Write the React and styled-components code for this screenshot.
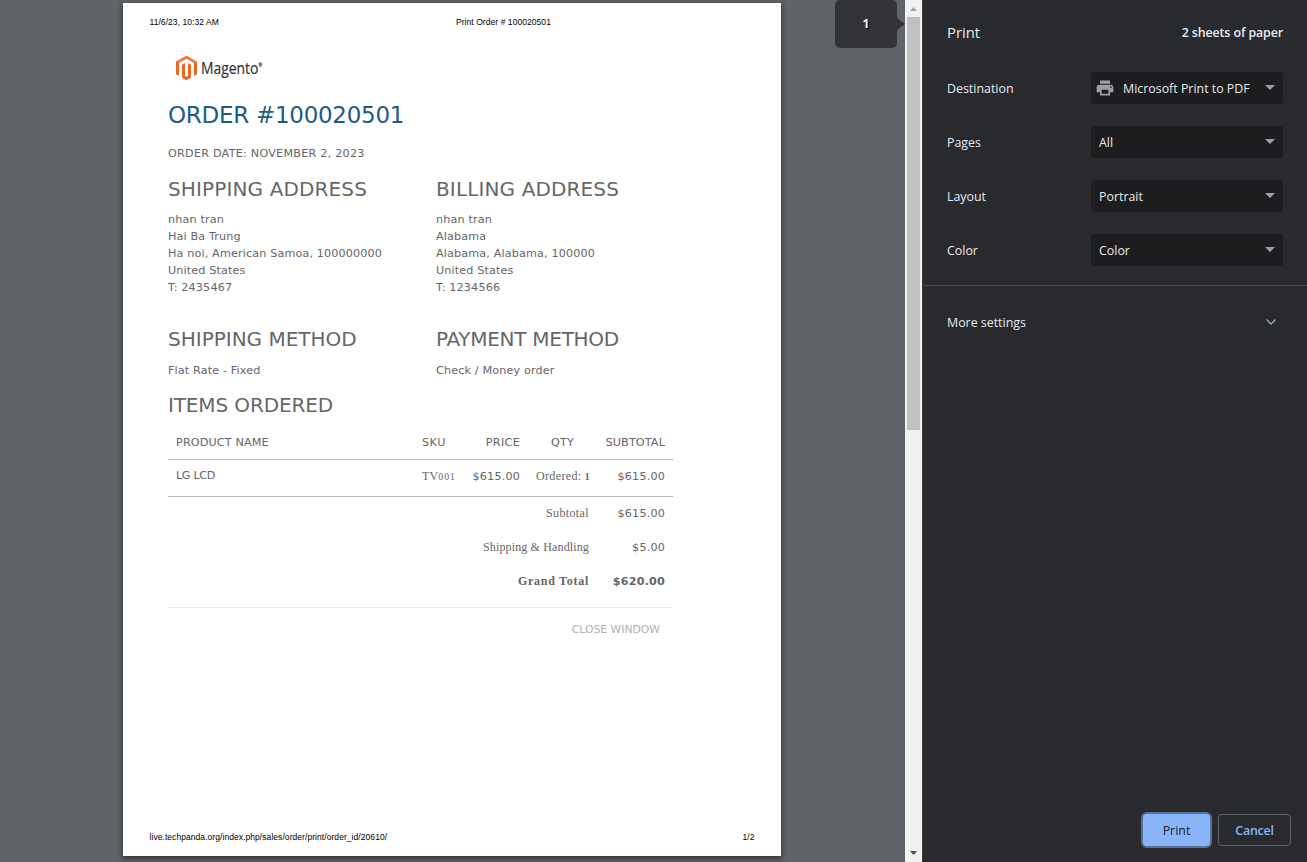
import React from "react";
import styled, { createGlobalStyle } from "styled-components";
import { MdPrint } from "react-icons/md";

const GlobalStyle = createGlobalStyle`
  * { box-sizing: border-box; }
  body { margin: 0; overflow: hidden; background: #292a2d; }
`;

const verdana = `"DejaVu Sans", Verdana, sans-serif`;
const georgia = `"Liberation Serif", Georgia, serif`;
const segoe = `"Open Sans", "Segoe UI", sans-serif`;

const Window = styled.div`
  display: flex;
  width: 1307px;
  height: 862px;
  overflow: hidden;
`;

/* ---------- preview ---------- */

const Viewer = styled.main`
  position: relative;
  width: 905px;
  height: 862px;
  padding: 3px 0 0 123px;
  background: #606468;
`;

const Sheet = styled.article`
  display: flex;
  flex-direction: column;
  width: 658px;
  height: 853px;
  background: #fff;
  color: #666;
  font: 11.2px/17px ${verdana};
  white-space: nowrap;
  box-shadow: 0 2px 5px 1px rgba(0, 0, 0, 0.45);
`;

const SheetMargin = styled.div`
  display: grid;
  grid-template-columns: ${(p) => p.$columns};
  align-items: center;
  flex: none;
  height: 38px;
  padding: 0 26.5px 0 26.5px;
  color: #000;
  font: 8.5px/12px "Liberation Sans", Arial, sans-serif;
  letter-spacing: 0.06px;
`;

const SheetBody = styled.div`
  flex: 1;
  width: 550px;
  padding-left: 45px;
`;

const LogoRow = styled.div`
  display: flex;
  align-items: center;
  height: 55px;
  padding: 0 0 1px 8px;
`;

const OrderTitle = styled.h1`
  margin: 0;
  color: #1e5d82;
  font-size: 23px;
  font-weight: 400;
  line-height: 39px;
  letter-spacing: -0.28px;
`;

const OrderDate = styled.p`
  margin: 0;
  line-height: 37px;
  letter-spacing: 0.23px;
`;

const Columns = styled.div`
  display: grid;
  grid-template-columns: 268px 1fr;
  height: ${(p) => p.$height}px;
`;

const SectionTitle = styled.h2`
  margin: 0;
  font-size: 20px;
  font-weight: 400;
  line-height: 34px;
  letter-spacing: ${(p) => p.$tracking || 0}px;
`;

const Lines = styled.address`
  margin-top: ${(p) => p.$gap}px;
  font-style: normal;
  letter-spacing: 0.14px;
`;

const Table = styled.div`
  width: 505px;
  margin-top: 4px;
`;

const TableRow = styled.div`
  display: grid;
  grid-template-columns: 246px 50px 64px 69px 76px;
  height: ${(p) => p.$height}px;
  line-height: 34px;
  border-bottom: 1px solid #b9b9b9;
`;

const Cell = styled.span`
  padding: 0 8px;
  text-align: ${(p) => p.$align || "left"};
  letter-spacing: ${(p) => p.$tracking ?? 0.17}px;
`;

const ProductCell = styled(Cell)`
  line-height: 31px;
`;

const SerifCell = styled(Cell)`
  font-family: ${georgia};
  font-size: 12px;
  line-height: ${(p) => p.$line || 32}px;
`;

const SmallFigures = styled.span`
  font-size: 9.8px;
  font-weight: ${(p) => (p.$bold ? 700 : 400)};
  letter-spacing: 0.9px;
`;

const Totals = styled.div`
  height: 111px;
  border-bottom: 1px solid #ebebeb;
`;

const TotalRow = styled.div`
  display: grid;
  grid-template-columns: 429px 76px;
  height: 34px;
  line-height: 34px;
  font-weight: ${(p) => (p.$grand ? 700 : 400)};
`;

const CloseWindow = styled.div`
  width: 505px;
  padding-right: 13px;
  color: #b1b1b1;
  font-size: 10.8px;
  line-height: 43px;
  text-align: right;
`;

const PageBadge = styled.div`
  position: absolute;
  top: 0;
  left: 835px;
  width: 62px;
  border-radius: 5px;
  background: #323336;
  color: #fff;
  font: 700 12px/48px ${segoe};
  text-align: center;
  text-shadow: 1px 1px 1px #000;

  &::after {
    content: "";
    position: absolute;
    top: 18px;
    left: 62px;
    border: 6px solid transparent;
    border-left: 8px solid #323336;
    border-right: 0;
  }
`;

const Scrollbar = styled.div`
  display: flex;
  flex-direction: column;
  align-items: center;
  width: 17px;
  height: 862px;
  background: #f1f1f1;
`;

const ScrollArrow = styled.svg`
  display: block;
  flex: none;
  width: 17px;
  height: 17px;
  fill: ${(p) => p.$color};
`;

const Thumb = styled.div`
  width: 13px;
  height: 413px;
  margin-bottom: auto;
  background: #c1c1c1;
`;

/* ---------- settings ---------- */

const Panel = styled.aside`
  display: flex;
  flex-direction: column;
  width: 385px;
  height: 862px;
  border-left: 1px solid #36373a;
  background: #292a2d;
  color: #e8eaed;
  font: 12.4px/20px ${segoe};
  white-space: nowrap;
`;

const PanelHeader = styled.header`
  display: flex;
  align-items: center;
  justify-content: space-between;
  height: 61px;
  padding: 4px 24px 0;
`;

const PanelTitle = styled.h1`
  margin: -2px 0 0;
  font-size: 14.8px;
  font-weight: 400;
  line-height: 20px;
`;

const SheetCount = styled.span`
  font-weight: 600;
  letter-spacing: -0.1px;
`;

const SettingRow = styled.label`
  display: flex;
  align-items: center;
  justify-content: space-between;
  height: 54px;
  padding: 0 24px;
`;

const Label = styled.span`
  padding-top: 2px;
`;

const Select = styled.span`
  display: flex;
  align-items: center;
  gap: 8px;
  width: 192px;
  height: 32px;
  padding: 0 8px 0 ${(p) => (p.$icon ? 4 : 8)}px;
  border-radius: 4px;
  background: #1d1d1f;

  > svg:first-child { color: #9aa0a6; }
`;

const Caret = styled.svg`
  width: 10px;
  height: 5px;
  margin: -2px 0 0 auto;
  fill: #9aa0a6;
`;

const MoreSettings = styled.div`
  display: flex;
  align-items: center;
  justify-content: space-between;
  height: 73px;
  margin-top: 8px;
  padding: 0 31px 0 24px;
  border-top: 1px solid #46474a;
`;

const Chevron = styled.svg`
  width: 10px;
  height: 6px;
  fill: none;
  stroke: #9aa0a6;
  stroke-width: 1.5;
`;

const Actions = styled.footer`
  display: flex;
  justify-content: flex-end;
  gap: 8px;
  margin-top: auto;
  padding: 0 16px 16px;
`;

const Button = styled.button`
  width: 73px;
  height: 32px;
  padding: 2px 0 0;
  border: 1px solid #5f6368;
  border-radius: 4px;
  background: transparent;
  color: #8ab4f8;
  font: 600 12.4px/20px ${segoe};
  letter-spacing: -0.2px;
`;

const PrimaryButton = styled(Button)`
  width: 67px;
  border: 0;
  background: #8ab4f8;
  color: #202124;
  font-weight: 400;
  letter-spacing: 0;
  box-shadow: 0 0 0 2px #58719a;
`;

function MagentoLogo() {
  return (
    <svg width="92" height="30" viewBox="0 -2 92 30">
      <path fill="#f37b3f" d="M10.5 0.4 21 6.4V19L18 20.7V8.1L10.5 3.8 3 8.1V20.7L0 19V6.4Z" />
      <path fill="#f26322" d="M0 6.4 3 8.1V20.7L0 19ZM18 8.1 21 6.4V19L18 20.7Z" />
      <path fill="#f26322" d="M6 9.8 9 8.1V20.9L10.5 21.8 12 20.9V8.1L15 9.8V22.5L10.5 25.2 6 22.5Z" />
      <text x="25" y="18.6" fill="#333" stroke="#333" strokeWidth="0.2" fontFamily={segoe} fontSize="16.2" textLength="61" lengthAdjust="spacingAndGlyphs">
        Magento<tspan dy="-6.5" fontSize="5">®</tspan>
      </text>
    </svg>
  );
}

function Address({ title, tracking, lines, gap = 5 }) {
  return (
    <section>
      <SectionTitle $tracking={tracking}>{title}</SectionTitle>
      <Lines $gap={gap}>
        {lines.map((line) => (
          <div key={line}>{line}</div>
        ))}
      </Lines>
    </section>
  );
}

function Setting({ label, value, icon }) {
  return (
    <SettingRow>
      <Label>{label}</Label>
      <Select $icon={Boolean(icon)}>
        {icon}
        <Label>{value}</Label>
        <Caret viewBox="0 0 10 5"><path d="M0 0h10L5 5z" /></Caret>
      </Select>
    </SettingRow>
  );
}

export default function App() {
  return (
    <Window>
      <GlobalStyle />
      <Viewer>
        <Sheet>
          <SheetMargin $columns="306.5px 1fr">
            <span>11/6/23, 10:32 AM</span>
            <span>Print Order # 100020501</span>
          </SheetMargin>
          <SheetBody>
            <LogoRow><MagentoLogo /></LogoRow>
            <OrderTitle>ORDER #100020501</OrderTitle>
            <OrderDate>ORDER DATE: NOVEMBER 2, 2023</OrderDate>
            <Columns $height={150}>
              <Address
                title="SHIPPING ADDRESS"
                tracking={0.13}
                lines={["nhan tran", "Hai Ba Trung", "Ha noi, American Samoa, 100000000", "United States", "T: 2435467"]}
              />
              <Address
                title="BILLING ADDRESS"
                tracking={0.13}
                lines={["nhan tran", "Alabama", "Alabama, Alabama, 100000", "United States", "T: 1234566"]}
              />
            </Columns>
            <Columns $height={66}>
              <Address title="SHIPPING METHOD" gap={6} lines={["Flat Rate - Fixed"]} />
              <Address title="PAYMENT METHOD" gap={6} tracking={-0.28} lines={["Check / Money order"]} />
            </Columns>
            <SectionTitle $tracking={-0.13}>ITEMS ORDERED</SectionTitle>
            <Table>
              <TableRow $height={34}>
                <Cell $tracking={0.14}>PRODUCT NAME</Cell>
                <Cell $tracking={0.5}>SKU</Cell>
                <Cell $align="right" $tracking={0.3}>PRICE</Cell>
                <Cell $align="center">QTY</Cell>
                <Cell $align="right" $tracking={0.12}>SUBTOTAL</Cell>
              </TableRow>
              <TableRow $height={37}>
                <ProductCell $tracking={-0.36}>LG LCD</ProductCell>
                <SerifCell>TV<SmallFigures>001</SmallFigures></SerifCell>
                <Cell $align="right">$615.00</Cell>
                <SerifCell $align="right" $tracking={0.35}>Ordered: <SmallFigures $bold>1</SmallFigures></SerifCell>
                <Cell $align="right">$615.00</Cell>
              </TableRow>
              <Totals>
                <TotalRow>
                  <SerifCell $align="right" $tracking={0.38}>Subtotal</SerifCell>
                  <Cell $align="right">$615.00</Cell>
                </TotalRow>
                <TotalRow>
                  <SerifCell $align="right" $tracking={0.14}>Shipping &amp; Handling</SerifCell>
                  <Cell $align="right">$5.00</Cell>
                </TotalRow>
                <TotalRow $grand>
                  <SerifCell $align="right" $tracking={0.73}>Grand Total</SerifCell>
                  <Cell $align="right">$620.00</Cell>
                </TotalRow>
              </Totals>
            </Table>
            <CloseWindow>CLOSE WINDOW</CloseWindow>
          </SheetBody>
          <SheetMargin $columns="1fr auto">
            <span>live.techpanda.org/index.php/sales/order/print/order_id/20610/</span>
            <span>1/2</span>
          </SheetMargin>
        </Sheet>
        <PageBadge>1</PageBadge>
      </Viewer>
      <Scrollbar>
        <ScrollArrow $color="#a3a3a3" viewBox="0 0 17 17"><path d="M5 11h7L8.5 7z" /></ScrollArrow>
        <Thumb />
        <ScrollArrow $color="#505050" viewBox="0 0 17 17"><path d="M5 6h7L8.5 10z" /></ScrollArrow>
      </Scrollbar>
      <Panel>
        <PanelHeader>
          <PanelTitle>Print</PanelTitle>
          <SheetCount>2 sheets of paper</SheetCount>
        </PanelHeader>
        <Setting label="Destination" value="Microsoft Print to PDF" icon={<MdPrint size={20} />} />
        <Setting label="Pages" value="All" />
        <Setting label="Layout" value="Portrait" />
        <Setting label="Color" value="Color" />
        <MoreSettings>
          <Label>More settings</Label>
          <Chevron viewBox="0 0 10 6"><path d="M.5 .5 5 5 9.5 .5" /></Chevron>
        </MoreSettings>
        <Actions>
          <PrimaryButton>Print</PrimaryButton>
          <Button>Cancel</Button>
        </Actions>
      </Panel>
    </Window>
  );
}
